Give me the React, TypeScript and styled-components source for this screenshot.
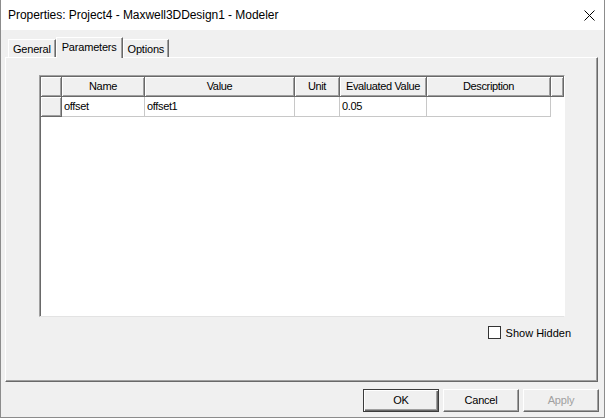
import React from "react";
import styled, {createGlobalStyle} from "styled-components";

const Global = createGlobalStyle`
  html, body {
    margin: 0;
    padding: 0;
    background: #f0f0f0;
  }
  body {
    font-family: "Liberation Sans", Arial, sans-serif;
    font-size: 11px;
    color: #000;
  }
`;

const Window = styled.div`
  width: 605px;
  height: 418px;
  box-sizing: border-box;
  border: 1px solid #8c8c8c;
  border-top: none;
  background: #f0f0f0;
  display: flex;
  flex-direction: column;
`;

const TitleBar = styled.div`
  height: 30px;
  flex: none;
  background: #fff;
  display: flex;
  align-items: center;
  justify-content: space-between;
  padding: 0 9px 0 7px;
  font-size: 12px;
  letter-spacing: -0.05px;
`;

const Close = styled.svg`
  width: 11px;
  height: 11px;
`;

const Body = styled.div`
  flex: 1;
  display: flex;
  flex-direction: column;
  padding: 7px 6px 0 4px;
`;

const Tabs = styled.div`
  display: flex;
  align-items: flex-end;
  height: 20px;
  padding-left: 3px;
`;

const Tab = styled.div<{ $active?: boolean }>`
  box-sizing: border-box;
  height: ${p => (p.$active ? "21px" : "18px")};
  margin-bottom: ${p => (p.$active ? "-1px" : "0")};
  padding: ${p => (p.$active ? "3px 5px 0" : "3px 4px 0")};
  border-top: 1px solid #fff;
  border-left: 1px solid #fff;
  border-right: 1px solid #696969;
  box-shadow: inset -1px 0 #a0a0a0;
  background: #f0f0f0;
  position: relative;
  z-index: ${p => (p.$active ? 1 : 0)};
  letter-spacing: -0.2px;
`;

const Panel = styled.div`
  box-sizing: border-box;
  height: 325px;
  border-top: 1px solid #fff;
  border-left: 1px solid #fff;
  border-right: 1px solid #696969;
  border-bottom: 1px solid #696969;
  box-shadow: inset -1px -1px #a0a0a0;
  padding: 17px 34px 0 33px;
  display: flex;
  flex-direction: column;
`;

const Grid = styled.div`
  box-sizing: border-box;
  width: 526px;
  height: 242px;
  background: #fff;
  border-top: 1px solid #a0a0a0;
  border-left: 1px solid #a0a0a0;
  border-right: 1px solid #fff;
  border-bottom: 1px solid #e3e3e3;
  box-shadow: inset 1px 1px #696969;
  padding: 1px 0 0 1px;
`;

const Row = styled.div`
  display: flex;
  height: 20px;
`;

const HeadCell = styled.div<{ $w: number }>`
  box-sizing: border-box;
  width: ${p => p.$w}px;
  height: 20px;
  flex: none;
  background: #f0f0f0;
  border-right: 1px solid #696969;
  border-bottom: 1px solid #696969;
  box-shadow: inset 1px 1px #fff, inset -1px -1px #a0a0a0;
  display: flex;
  align-items: center;
  justify-content: center;
  letter-spacing: -0.35px;
  padding-bottom: 1px;
`;

const Cell = styled.div<{ $w: number }>`
  box-sizing: border-box;
  width: ${p => p.$w}px;
  height: 20px;
  flex: none;
  border-right: 1px solid #c8c8c8;
  border-bottom: 1px solid #c8c8c8;
  display: flex;
  align-items: center;
  padding: 0 0 1px 2px;
  letter-spacing: -0.35px;
`;

const OptionRow = styled.div`
  display: flex;
  justify-content: flex-end;
  align-items: center;
  gap: 5px;
  padding: 9px 0 0 0;
  margin-right: -8px;
`;

const Check = styled.span`
  box-sizing: border-box;
  width: 13px;
  height: 13px;
  border: 1px solid #333;
  background: #fff;
`;

const Footer = styled.div`
  display: flex;
  justify-content: flex-end;
  gap: 4px;
  padding: 7px 0 0;
  margin-right: -1px;
`;

const Button = styled.button<{ $default?: boolean }>`
  box-sizing: border-box;
  width: 76px;
  height: 23px;
  font-family: inherit;
  font-size: 11px;
  letter-spacing: -0.2px;
  background: #f0f0f0;
  color: ${p => (p.disabled ? "#a0a0a0" : "#000")};
  border: 1px solid;
  border-color: ${p => (p.$default ? "#3c3c3c" : "#fff #696969 #696969 #fff")};
  box-shadow: ${p =>
    p.$default
      ? "inset 1px 1px #fff, inset -1px -1px #696969, inset -2px -2px #a0a0a0"
      : "inset -1px -1px #a0a0a0"};
  padding: 0 0 1px;
`;

const cols = [
  {name: "", w: 21},
  {name: "Name", w: 83},
  {name: "Value", w: 150},
  {name: "Unit", w: 45},
  {name: "Evaluated Value", w: 87},
  {name: "Description", w: 124},
  {name: "", w: 13},
];

const row = ["offset", "offset1", "", "0.05", ""];

export default function App() {
  return (
    <Window>
      <Global/>
      <TitleBar>
        <span>Properties: Project4 - Maxwell3DDesign1 - Modeler</span>
        <Close viewBox="0 0 11 11">
          <path d="M0.5 0.5 L10.5 10.5 M10.5 0.5 L0.5 10.5" stroke="#000" strokeWidth="1"/>
        </Close>
      </TitleBar>
      <Body>
        <Tabs>
          <Tab>General</Tab>
          <Tab $active>Parameters</Tab>
          <Tab>Options</Tab>
        </Tabs>
        <Panel>
          <Grid>
            <Row>
              {cols.map((c, i) => <HeadCell key={i} $w={c.w}>{c.name}</HeadCell>)}
            </Row>
            <Row>
              <HeadCell $w={cols[0].w}/>
              {row.map((v, i) => <Cell key={i} $w={cols[i + 1].w}>{v}</Cell>)}
            </Row>
          </Grid>
          <OptionRow>
            <Check/>
            <span>Show Hidden</span>
          </OptionRow>
        </Panel>
        <Footer>
          <Button $default>OK</Button>
          <Button>Cancel</Button>
          <Button disabled>Apply</Button>
        </Footer>
      </Body>
    </Window>
  );
}
